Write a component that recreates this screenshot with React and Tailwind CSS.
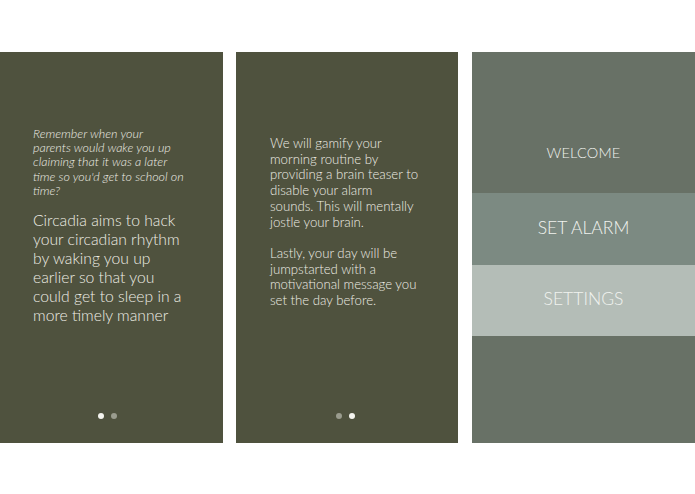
export default function App() {
  return (
    <div
      className="w-[695px] h-[494px] bg-white flex flex-row pt-[52px]"
      style={{ fontFamily: "Lato, 'Open Sans', sans-serif" }}
    >
      {/* Panel 1 */}
      <div className="w-[223px] h-[391px] bg-[#4f523e] flex flex-col pl-[33px] pt-[75px] pb-[24px] text-[#eeede5]">
        <p className="whitespace-nowrap italic text-[12.5px] leading-[14.2px] font-light">
          Remember when your<br />
          parents would wake you up<br />
          claiming that it was a later<br />
          time so you'd get to school on<br />
          time?
        </p>
        <p className="whitespace-nowrap mt-[13px] text-[15.7px] leading-[19px] font-light">
          Circadia aims to hack<br />
          your circadian rhythm<br />
          by waking you up<br />
          earlier so that you<br />
          could get to sleep in a<br />
          more timely manner
        </p>
        <div className="mt-auto flex flex-row justify-center gap-[7px] pr-[41px]">
          <span className="w-[6px] h-[6px] rounded-full bg-[#f4f4ef]"></span>
          <span className="w-[6px] h-[6px] rounded-full bg-[#9a9c8e]"></span>
        </div>
      </div>

      <div className="w-[13px]"></div>

      {/* Panel 2 */}
      <div className="w-[222px] h-[391px] bg-[#4f523e] flex flex-col pl-[34px] pt-[84px] pb-[24px] text-[#eeede5]">
        <p className="whitespace-nowrap text-[13.2px] leading-[15.7px] font-light">
          We will gamify your<br />
          morning routine by<br />
          providing a brain teaser to<br />
          disable your alarm<br />
          sounds. This will mentally<br />
          jostle your brain.<br />
          <br />
          Lastly, your day will be<br />
          jumpstarted with a<br />
          motivational message you<br />
          set the day before.
        </p>
        <div className="mt-auto flex flex-row justify-center gap-[7px] pr-[37px]">
          <span className="w-[6px] h-[6px] rounded-full bg-[#9a9c8e]"></span>
          <span className="w-[6px] h-[6px] rounded-full bg-[#f4f4ef]"></span>
        </div>
      </div>

      <div className="w-[14px]"></div>

      {/* Panel 3 */}
      <div className="w-[223px] h-[391px] bg-[#687166] flex flex-col text-[#f1f3ef]">
        <div className="h-[141px] flex flex-col justify-end items-center pb-[31px]">
          <span className="text-[14.5px] leading-[18px] font-light tracking-[0.2px]">WELCOME</span>
        </div>
        <div className="h-[72px] bg-[#7c8a82] flex items-center justify-center pb-[3px]">
          <span className="text-[17.5px] leading-[20px] font-light">SET ALARM</span>
        </div>
        <div className="h-[71px] bg-[#b4bdb7] flex items-center justify-center pb-[4px]">
          <span className="text-[17.5px] leading-[20px] font-light">SETTINGS</span>
        </div>
      </div>
    </div>
  );
}
